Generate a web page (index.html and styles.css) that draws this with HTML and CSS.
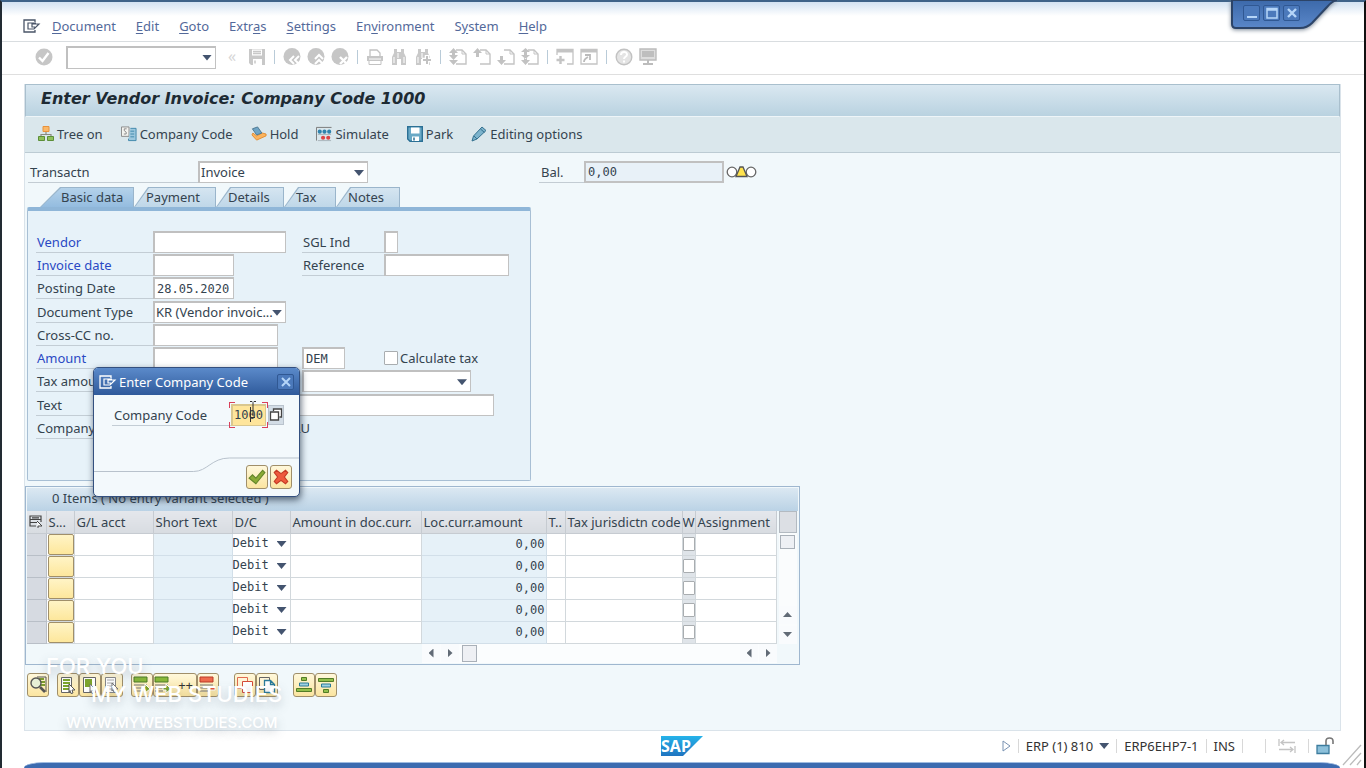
FILE: index.html
```
<!DOCTYPE html>
<html lang="en">
<head>
    <meta charset="UTF-8">
    <meta name="viewport" content="width=device-width, initial-scale=1.0">
    <title>Enter Vendor Invoice: Company Code 1000</title>
    <link rel="stylesheet" href="styles.css">
</head>
<body>
    <!-- Icon set -->
    <svg class="sprite" aria-hidden="true">
        <symbol id="i-menu" viewBox="0 0 18 14"><path d="M12 3V1H1v12h11v-2" fill="none" stroke="currentColor" stroke-width="1.3"/><path d="M13 4H5v6h6l5-5H9v3h3" fill="none" stroke="currentColor" stroke-width="1.2"/></symbol>
        <symbol id="i-ok" viewBox="0 0 18 18"><circle cx="9" cy="9" r="8.500" fill="#c6c6c6"/><path d="M4 9.500l3.500 3.500L13.500 5" fill="none" stroke="#fff" stroke-width="2.400"/></symbol>
        <symbol id="i-save" viewBox="0 0 18 18"><path d="M1 1h16v16H3l-2-2z" fill="#c8c8c8"/><path d="M4 1.500h10v6H4zM5 11h9v6H5z" fill="#fff"/><path d="M5 3.500h8M5 5.500h8M7 12.500v3" stroke="#c8c8c8" stroke-width="1.500"/></symbol>
        <symbol id="i-back" viewBox="0 0 18 18"><circle cx="9" cy="8.500" r="8.500" fill="#c6c6c6"/><path d="M11 8l-4 4 4 4M16 8l-4 4 4 4" fill="none" stroke="#fff" stroke-width="2"/></symbol>
        <symbol id="i-exit" viewBox="0 0 18 18"><circle cx="9" cy="8.500" r="8.500" fill="#c6c6c6"/><path d="M8 11l4-4 4 4M8 16l4-4 4 4" fill="none" stroke="#fff" stroke-width="2"/></symbol>
        <symbol id="i-cancel" viewBox="0 0 18 18"><circle cx="9" cy="8.500" r="8.500" fill="#c6c6c6"/><path d="M9 9l7 7M16 9l-7 7" fill="none" stroke="#fff" stroke-width="2.400"/></symbol>
        <symbol id="i-print" viewBox="0 0 18 18"><path d="M4 8V2h7l3 3v3" fill="#fff" stroke="#c2c2c2" stroke-width="1.300"/><path d="M1 8h16v5H1z" fill="#c6c6c6"/><path d="M3 13v3.500h12V13M4 10.500h10" fill="none" stroke="#c2c2c2"/><path d="M3 11h12" stroke="#fff"/></symbol>
        <symbol id="i-find" viewBox="0 0 18 18"><path d="M4 1h3v3h4V1h3v4l2 4v8h-5v-6H7v6H2V9l2-4z" fill="#c9c9c9"/><path d="M4 9v6M14 9v6M8 5v5" stroke="#fff"/></symbol>
        <symbol id="i-findnext" viewBox="0 0 18 18"><path d="M4 1h3v3h4V1h3v4l2 4v8h-5v-6H7v6H2V9l2-4z" fill="#c9c9c9"/><path d="M4 9v6M8 5v5" stroke="#fff"/><path d="M13 7v10M8 12h10" stroke="#fff" stroke-width="4.500"/><path d="M13 8v8M9 12h8" stroke="#c2c2c2" stroke-width="2"/></symbol>
        <symbol id="i-page" viewBox="0 0 18 18"><path d="M7 2h6l4 4v10H7" fill="none" stroke="#c4c4c4" stroke-width="1.400"/><path d="M13 2v4h4" fill="none" stroke="#c4c4c4"/></symbol>
        <symbol id="i-first" viewBox="0 0 18 18"><use href="#i-page"/><path d="M0 5l4.500-5L9 5H6v2h3l-4.500 5L0 7h3V5zM0 12l4.500 5L9 12z" fill="#c2c2c2"/></symbol>
        <symbol id="i-prev" viewBox="0 0 18 18"><use href="#i-page"/><path d="M0 5l4.500-5L9 5H6v4H3V5z" fill="#c2c2c2"/></symbol>
        <symbol id="i-next" viewBox="0 0 18 18"><use href="#i-page"/><path d="M0 12l4.500 5L9 12H6V8H3v4z" fill="#c2c2c2"/></symbol>
        <symbol id="i-last" viewBox="0 0 18 18"><use href="#i-page"/><path d="M0 4l4.500-4L9 4H6v3h3l-4.500 4L0 7h3V4zM0 12l4.500 5L9 12H6v-2H3v2z" fill="#c2c2c2"/></symbol>
        <symbol id="i-session" viewBox="0 0 18 18"><path d="M1 7V1.500h16V16h-6" fill="none" stroke="#c4c4c4" stroke-width="1.300"/><path d="M1 3h16" stroke="#c4c4c4" stroke-width="3"/><path d="M4.500 8v8M.5 12h8" stroke="#c4c4c4" stroke-width="2.400"/></symbol>
        <symbol id="i-shortcut" viewBox="0 0 18 18"><path d="M1 1.500h16V16H1z" fill="none" stroke="#c4c4c4" stroke-width="1.300"/><path d="M1 3h16" stroke="#c4c4c4" stroke-width="3"/><path d="M4 14c0-3 2-4 4-5M5 7h5v5" fill="none" stroke="#bbb" stroke-width="1.800"/></symbol>
        <symbol id="i-help" viewBox="0 0 18 18"><circle cx="9" cy="9" r="7.800" fill="#e4e4e4" stroke="#c2c2c2" stroke-width="1.400"/><path d="M6 7c0-4 6-4 6-.5C12 9 9 8.500 9 11M9 12.500v2" fill="none" stroke="#fff" stroke-width="2"/></symbol>
        <symbol id="i-monitor" viewBox="0 0 18 18"><path d="M1 1h16v11H1z" fill="#ddd" stroke="#bcbcbc" stroke-width="1.400"/><path d="M3 4h12M3 6h12M3 8h12" stroke="#b4b4b4" stroke-width="1.400"/><path d="M8 12h2v3h4v2H4v-2h4z" fill="#bcbcbc"/></symbol>
        <symbol id="i-tree" viewBox="0 0 16 16"><path d="M8 5v4M3 11V8.500h10V11" fill="none" stroke="#8a8a80" stroke-width="1.200"/><path d="M5 .5h6v5H5z" fill="#fbb868" stroke="#e8923c"/><path d="M.5 10.500h6v4h-6zM9.500 10.500h6v4h-6z" fill="#8fc05c" stroke="#5c8f38"/></symbol>
        <symbol id="i-company" viewBox="0 0 17 16"><path d="M.5.500h8v10h-8z" fill="#f4f4f0" stroke="#888"/><path d="M6 2.500H3.500v2l2 1.500v2H3" fill="none" stroke="#888"/><path d="M10 2h6v13H8v-2" fill="#9cc8de" stroke="#3f88ab"/><path d="M10 5h4M10 8h4M10 11h4" stroke="#3f88ab"/></symbol>
        <symbol id="i-hold" viewBox="0 0 17 16"><path d="M1 9l5 5.500 10-4.500V8l-4-1-6 3-4-3z" fill="#fbb45e" stroke="#e38c2e"/><path d="M1.500 2.500L7 .5l4.500 6.500L6 9z" fill="#6fa5c6" stroke="#4b7690"/></symbol>
        <symbol id="i-simulate" viewBox="0 0 17 16"><path d="M.5 15V1h16" fill="none" stroke="#777"/><path d="M2 8.500h14M2 15h14" stroke="#a9b4ba"/><g fill="#2f83ad"><circle cx="4" cy="5.500" r="2.200"/><circle cx="9" cy="5.500" r="2.200"/><circle cx="14" cy="5.500" r="2.200"/></g><g fill="#d44"><circle cx="7.500" cy="12" r="2.200"/><circle cx="13" cy="12" r="2.200"/></g></symbol>
        <symbol id="i-park" viewBox="0 0 16 16"><path d="M.7.700h14.600v14.600H3L.7 13z" fill="#69a9c6" stroke="#2b7095" stroke-width="1.400"/><path d="M4 1.500h8.500v6H4zM5 10.500h7V15H5z" fill="#fff"/><path d="M7 11.500v3" stroke="#2b7095" stroke-width="1.500"/></symbol>
        <symbol id="i-edit" viewBox="0 0 16 16"><path d="M1 15l1.500-5L11 1l4 3.500L6 13z" fill="#7cb3cc" stroke="#34718f"/><path d="M3 10l3 3M9.500 3l4 3.500" stroke="#34718f" fill="none"/></symbol>
        <symbol id="i-config" viewBox="0 0 14 14"><path d="M1 1h11v3.500H1zM1 4.500V11h6M3 2.800h7M1 7.500h7M12 4v3" fill="none" stroke="#444" stroke-width="1.200"/><path d="M8 6l5 5H9v2" fill="#fff" stroke="#444"/></symbol>
        <symbol id="b-detail" viewBox="0 0 18 18"><path d="M8 1h9v15" fill="none" stroke="#555"/><path d="M10 3h5M11 6h5M11 9h5" stroke="#7d9c2f" stroke-width="2"/><circle cx="7" cy="7" r="5" fill="#e7efd6" stroke="#555" stroke-width="1.400"/><path d="M11 11l5 5" stroke="#555" stroke-width="2.600"/></symbol>
        <symbol id="b-select" viewBox="0 0 18 18"><path d="M2.500 1.500h10v15h-10z" fill="#fff" stroke="#666"/><path d="M4 4h7M4 7h7M4 10h7M4 13h7" stroke="#7da52c" stroke-width="2"/><path d="M10 8l6 6h-3l1 3-2 .5-1-3-1 1.500z" fill="#fff" stroke="#555"/></symbol>
        <symbol id="b-block" viewBox="0 0 18 18"><path d="M2.500 1.500h12v15h-12z" fill="#fff" stroke="#666"/><path d="M4 3h7v8H4z" fill="#7da52c"/><path d="M9 8l6 6h-3l1 3-2 .5-1-3-1 1.500z" fill="#fff" stroke="#777"/></symbol>
        <symbol id="b-deselect" viewBox="0 0 18 18"><path d="M2.500 1.500h10v15h-10z" fill="#fff" stroke="#888"/><path d="M4 4h7M4 7h7M4 10h7M4 13h7" stroke="#aaa"/><path d="M9 7l6 6h-3l1 3-2 .5-1-3-1 1.500z" fill="#fff" stroke="#777"/></symbol>
        <symbol id="b-insert" viewBox="0 0 18 18"><path d="M1 1h13v5H1z" fill="#88b83a" stroke="#4d7a26"/><path d="M1 9h13M1 12h8M1 15h8" stroke="#777"/><path d="M9 11h3V8l5 5-5 4v-3H9z" fill="#7da52c" stroke="#fff"/></symbol>
        <symbol id="b-delete" viewBox="0 0 18 18"><path d="M1 1h13v5H1z" fill="#ee6a4d" stroke="#bb3d28"/><path d="M1 9h13M1 12h8M1 15h8" stroke="#777"/><path d="M9 11h7v3H9z" fill="#e6533c" stroke="#fff"/></symbol>
        <symbol id="b-copy" viewBox="0 0 18 18"><path d="M1.500 1.500h10v11h-10z" fill="#fff5d8" stroke="#e06a50"/><path d="M6.500 5.500h10v11h-10z" fill="#fff" stroke="#d44b38"/></symbol>
        <symbol id="b-paste" viewBox="0 0 18 18"><path d="M1.500 1.500h10v12h-10z" fill="#fff5d8" stroke="#666"/><path d="M6.500 4.500h6l4 4v8h-10zM12.500 4.500v4h4" fill="#fff" stroke="#2a7a9a" stroke-width="1.300"/></symbol>
        <symbol id="b-asc" viewBox="0 0 18 18"><path d="M6.500 1.500h5v3h-5zM1.500 12.500h15v3h-15z" fill="#92c04c" stroke="#527c26"/><path d="M4.500 7h9v3h-9z" fill="#9fd2e2" stroke="#2a7a9a"/></symbol>
        <symbol id="b-desc" viewBox="0 0 18 18"><path d="M6.500 13.500h5v3h-5zM1.500 2.500h15v3h-15z" fill="#92c04c" stroke="#527c26"/><path d="M4.500 8h9v3h-9z" fill="#9fd2e2" stroke="#2a7a9a"/></symbol>
    </svg>

    <div class="window">
        <nav class="menubar">
            <button class="menu-icon" aria-label="System menu"><svg width="18" height="14"><use href="#i-menu"/></svg></button>
            <a href="#"><u>D</u>ocument</a>
            <a href="#"><u>E</u>dit</a>
            <a href="#"><u>G</u>oto</a>
            <a href="#">Extr<u>a</u>s</a>
            <a href="#"><u>S</u>ettings</a>
            <a href="#">En<u>v</u>ironment</a>
            <a href="#">S<u>y</u>stem</a>
            <a href="#"><u>H</u>elp</a>
        </nav>

        <!-- Window controls -->
        <div class="controls">
            <svg class="controls-shape" viewBox="0 0 106 30" width="106" height="30" aria-hidden="true">
                <defs><linearGradient id="ctl" x1="0" y1="0" x2="0" y2="1"><stop offset="0" stop-color="#3c69aa"/><stop offset="1" stop-color="#5a87c9"/></linearGradient></defs>
                <path d="M1 0v24q0 4 4 4h64q7 0 12-5l15-16q5-6 10-7z" fill="url(#ctl)" stroke="#2c4468" stroke-width="2"/>
            </svg>
            <button aria-label="Minimize"><svg viewBox="0 0 12 12"><path d="M1 10h10" stroke="currentColor" stroke-width="2"/></svg></button>
            <button aria-label="Maximize"><svg viewBox="0 0 12 12"><path d="M1 1.500h10v9.500H1zM1 3h10" fill="none" stroke="currentColor" stroke-width="1.500"/></svg></button>
            <button aria-label="Close"><svg viewBox="0 0 12 12"><path d="M2 2l8 8M10 2l-8 8" stroke="currentColor" stroke-width="2.400"/></svg></button>
        </div>

        <div class="toolbar">
            <button aria-label="Enter"><svg><use href="#i-ok"/></svg></button>
            <span class="combo command"><input type="text" aria-label="Command"></span>
            <span class="chevrons">«</span>
            <button aria-label="Save"><svg><use href="#i-save"/></svg></button>
            <i class="sep"></i>
            <div class="group">
                <button aria-label="Back"><svg><use href="#i-back"/></svg></button>
                <button aria-label="Exit"><svg><use href="#i-exit"/></svg></button>
                <button aria-label="Cancel"><svg><use href="#i-cancel"/></svg></button>
            </div>
            <i class="sep"></i>
            <div class="group">
                <button aria-label="Print"><svg><use href="#i-print"/></svg></button>
                <button aria-label="Find"><svg><use href="#i-find"/></svg></button>
                <button aria-label="Find next"><svg><use href="#i-findnext"/></svg></button>
            </div>
            <i class="sep"></i>
            <div class="group">
                <button aria-label="First page"><svg><use href="#i-first"/></svg></button>
                <button aria-label="Previous page"><svg><use href="#i-prev"/></svg></button>
                <button aria-label="Next page"><svg><use href="#i-next"/></svg></button>
                <button aria-label="Last page"><svg><use href="#i-last"/></svg></button>
            </div>
            <i class="sep"></i>
            <div class="group">
                <button aria-label="New session"><svg><use href="#i-session"/></svg></button>
                <button aria-label="Create shortcut"><svg><use href="#i-shortcut"/></svg></button>
            </div>
            <i class="sep"></i>
            <div class="group">
                <button aria-label="Help"><svg><use href="#i-help"/></svg></button>
                <button aria-label="Layout"><svg><use href="#i-monitor"/></svg></button>
            </div>
        </div>

        <main class="workspace">
            <h1>Enter Vendor Invoice: Company Code 1000</h1>
            <div class="app-toolbar">
                <button><svg><use href="#i-tree"/></svg>Tree on</button>
                <button><svg><use href="#i-company"/></svg>Company Code</button>
                <button><svg><use href="#i-hold"/></svg>Hold</button>
                <button><svg><use href="#i-simulate"/></svg>Simulate</button>
                <button><svg><use href="#i-park"/></svg>Park</button>
                <button><svg><use href="#i-edit"/></svg>Editing options</button>
            </div>

            <div class="transaction">
                <label for="transactn">Transactn</label>
                <span class="combo"><select id="transactn"><option>Invoice</option></select></span>
                <label for="balance" class="bal">Bal.</label>
                <input type="text" id="balance" class="mono" value="0,00" readonly>
                <svg class="lights" width="32" height="14" viewBox="0 0 32 14" aria-hidden="true"><g fill="#fff" stroke="#666" stroke-width="1.300"><circle cx="6" cy="7" r="4.800"/><circle cx="25" cy="7" r="4.800"/></g><path d="M14 2h3l4 9.500H10z" fill="#ffe34d" stroke="#555" stroke-width="1.300"/></svg>
            </div>

            <div class="tabs" role="tablist">
                <button role="tab" class="tab active" aria-selected="true"><span>Basic data</span></button>
                <button role="tab" class="tab payment"><span>Payment</span></button>
                <button role="tab" class="tab details"><span>Details</span></button>
                <button role="tab" class="tab tax"><span>Tax</span></button>
                <button role="tab" class="tab notes"><span>Notes</span></button>
            </div>

            <div class="panel">
                <div class="row">
                    <label for="vendor" class="required">Vendor</label>
                    <input type="text" id="vendor" class="w-l">
                    <label for="sgl">SGL Ind</label>
                    <input type="text" id="sgl" class="w-xs">
                </div>
                <div class="row">
                    <label for="invoice-date" class="required">Invoice date</label>
                    <input type="text" id="invoice-date" class="w-s">
                    <label for="reference">Reference</label>
                    <input type="text" id="reference" class="w-m">
                </div>
                <div class="row">
                    <label for="posting-date">Posting Date</label>
                    <input type="text" id="posting-date" class="w-s mono" value="28.05.2020">
                </div>
                <div class="row">
                    <label for="doc-type">Document Type</label>
                    <span class="combo w-l"><select id="doc-type"><option>KR (Vendor invoic...</option></select></span>
                </div>
                <div class="row">
                    <label for="cross-cc">Cross-CC no.</label>
                    <input type="text" id="cross-cc" class="w-m">
                </div>
                <div class="row">
                    <label for="amount" class="required">Amount</label>
                    <input type="text" id="amount" class="w-m">
                    <input type="text" aria-label="Currency" class="w-cur mono" value="DEM">
                    <span class="check"><input type="checkbox" id="calc-tax"><label for="calc-tax">Calculate tax</label></span>
                </div>
                <div class="row">
                    <label for="tax-amount">Tax amount</label>
                    <input type="text" id="tax-amount" class="w-m">
                    <span class="combo w-code"><select aria-label="Tax code"><option></option></select></span>
                </div>
                <div class="row">
                    <label for="text">Text</label>
                    <input type="text" id="text" class="w-text">
                </div>
                <div class="row">
                    <label for="company">Company Code</label>
                    <output id="company" class="company">LU</output>
                </div>
            </div>

            <section class="items">
                <h2>0 Items ( No entry variant selected )</h2>
                <div class="items-body">
                    <table>
                        <colgroup>
                            <col class="c-sel"><col class="c-st"><col class="c-gl"><col class="c-short"><col class="c-dc"><col class="c-amt"><col class="c-loc"><col class="c-t"><col class="c-jur"><col class="c-w"><col class="c-asg">
                        </colgroup>
                        <thead>
                            <tr>
                                <th class="pick"><svg width="14" height="14" aria-hidden="true"><use href="#i-config"/></svg></th>
                                <th>S...</th>
                                <th>G/L acct</th>
                                <th>Short Text</th>
                                <th>D/C</th>
                                <th>Amount in doc.curr.</th>
                                <th>Loc.curr.amount</th>
                                <th>T..</th>
                                <th>Tax jurisdictn code</th>
                                <th class="narrow">W</th>
                                <th>Assignment</th>
                            </tr>
                        </thead>
                        <tbody id="items"></tbody>
                    </table>
                    <div class="vscroll">
                        <button class="corner" aria-label="Table settings"></button>
                        <span class="thumb"></span>
                        <button class="arrow up" aria-label="Scroll up"></button>
                        <button class="arrow down" aria-label="Scroll down"></button>
                    </div>
                </div>
                <div class="hscroll">
                    <button class="arrow left" aria-label="First column"></button>
                    <button class="arrow right" aria-label="Next column"></button>
                    <span class="thumb"></span>
                    <button class="arrow left end" aria-label="Previous column"></button>
                    <button class="arrow right" aria-label="Last column"></button>
                </div>
            </section>

            <div class="item-tools">
                <div><button aria-label="Detail"><svg><use href="#b-detail"/></svg></button></div>
                <div>
                    <button aria-label="Select all"><svg><use href="#b-select"/></svg></button>
                    <button aria-label="Select block"><svg><use href="#b-block"/></svg></button>
                    <button aria-label="Deselect all"><svg><use href="#b-deselect"/></svg></button>
                </div>
                <div>
                    <button aria-label="Insert row"><svg><use href="#b-insert"/></svg></button>
                    <button class="wide"><svg><use href="#b-insert"/></svg>++</button>
                    <button aria-label="Delete row"><svg><use href="#b-delete"/></svg></button>
                </div>
                <div>
                    <button aria-label="Copy"><svg><use href="#b-copy"/></svg></button>
                    <button aria-label="Copy fields"><svg><use href="#b-paste"/></svg></button>
                </div>
                <div>
                    <button aria-label="Sort ascending"><svg><use href="#b-asc"/></svg></button>
                    <button aria-label="Sort descending"><svg><use href="#b-desc"/></svg></button>
                </div>
            </div>
        </main>

        <footer class="statusbar">
            <svg class="logo" width="44" height="20" viewBox="0 0 44 20">
                <defs><linearGradient id="sap" x1="0" y1="0" x2="0" y2="1"><stop offset="0" stop-color="#25b3ea"/><stop offset="1" stop-color="#1f74c0"/></linearGradient></defs>
                <path d="M1 0h42L23 20H1z" fill="url(#sap)"/>
                <text x="1" y="16" class="logo-text">SAP</text>
            </svg>
            <div class="status">
                <svg width="9" height="12" viewBox="0 0 9 12"><path d="M1 1l7 5-7 5z" fill="#fff" stroke="#7b93b3"/></svg>
                <i class="sep"></i>
                <button class="system">ERP (1) 810</button>
                <i class="sep"></i>
                <span>ERP6EHP7-1</span>
                <i class="sep"></i>
                <span>INS</span>
                <i class="sep"></i>
                <i class="sep far"></i>
                <svg class="transfer" width="18" height="14" viewBox="0 0 18 14"><path d="M1 0v7M3 3.500h14M6 1L3 3.500 6 6M17 7v7M1 10.500h14M12 8l3 2.500-3 2.500" fill="none" stroke="#c4c4c4" stroke-width="1.300"/></svg>
                <i class="sep"></i>
                <svg width="18" height="18" viewBox="0 0 18 18"><path d="M1 8.500h12v8H1z" fill="#8cc0da" stroke="#3c7c9e" stroke-width="1.300"/><path d="M10 8V4q0-3 3.500-3T17 4v3" fill="none" stroke="#777" stroke-width="1.600"/></svg>
            </div>
            <svg class="grip" width="22" height="22" viewBox="0 0 22 22"><path d="M1 21L19 1M8 21L19 9M15 21l4-5" stroke="#bbb" stroke-width="1.300"/></svg>
        </footer>
        <div class="bottom-edge"></div>

        <form class="dialog" role="dialog" aria-labelledby="dialog-title">
            <header>
                <svg width="18" height="14"><use href="#i-menu"/></svg>
                <span id="dialog-title">Enter Company Code</span>
                <button type="button" aria-label="Close"><svg viewBox="0 0 12 12"><path d="M2 2l8 8M10 2l-8 8" stroke="currentColor" stroke-width="2"/></svg></button>
            </header>
            <div class="dialog-row">
                <label for="cc">Company Code</label>
                <span class="focus"><input type="text" id="cc" class="mono" value="1000"></span>
                <button type="button" class="match" aria-label="Search help"><svg width="14" height="14" viewBox="0 0 14 14"><path d="M4.500 3V1h8v8h-2M1.500 4h8v8h-8z" fill="#fff" stroke="#444" stroke-width="1.300"/></svg></button>
                <svg class="cursor" width="8" height="22" viewBox="0 0 8 22"><path d="M2 .5h2l1 1 1-1h2M5 2v13M3 16.500h4" fill="none" stroke="#333"/><path d="M2.500 6v15" stroke="#333"/></svg>
            </div>
            <svg class="curve" viewBox="0 0 206 16" height="16" preserveAspectRatio="none"><path d="M0 14.500h100c14 0 18-13.500 36-13.500h70" fill="none" stroke="#b8c2cc"/></svg>
            <div class="dialog-actions">
                <button type="button" aria-label="Continue"><svg viewBox="0 0 16 16"><path d="M1 9l3-3 3 3 6-7 2 2-8 10z" fill="#8aab35" stroke="#64852a"/></svg></button>
                <button type="button" aria-label="Cancel"><svg viewBox="0 0 16 16"><path d="M2 4l2-2 4 3 4-3 2 2-3 4 3 4-2 2-4-3-4 3-2-2 3-4z" fill="#ee5a3c" stroke="#c43a24"/></svg></button>
            </div>
        </form>

        <div class="watermark">
            <p>FOR YOU</p>
            <p class="second">MY WEB STUDIES</p>
            <p class="site">WWW.MYWEBSTUDIES.COM</p>
        </div>
    </div>

    <script>
        const items = document.getElementById('items');

        // Empty item lines
        for (let i = 1; i <= 5; i++) {
            const row = document.createElement('tr');
            row.innerHTML = `
                <td class="pick"></td>
                <td class="state"><button aria-label="Status ${i}"></button></td>
                <td><input type="text" aria-label="G/L acct ${i}"></td>
                <td class="locked"></td>
                <td class="dc"><span class="combo"><select class="mono" aria-label="D/C ${i}"><option>Debit</option></select></span></td>
                <td><input type="text" aria-label="Amount ${i}"></td>
                <td class="locked num mono">0,00</td>
                <td></td>
                <td><input type="text" aria-label="Tax jurisdiction ${i}"></td>
                <td class="flag"><input type="checkbox" aria-label="W ${i}"></td>
                <td><input type="text" aria-label="Assignment ${i}"></td>`;
            items.appendChild(row);
        }
    </script>
</body>
</html>
```
FILE: styles.css
```
* {
    box-sizing: border-box;
}

body {
    margin: 0;
    background-color: #fff;
    color: #34434f;
    font-family: "Noto Sans", Tahoma, sans-serif;
    font-size: 13px;
    line-height: 18px;
}

button, input, select {
    margin: 0;
    padding: 0;
    border: none;
    border-radius: 0;
    background: none;
    color: inherit;
    font: inherit;
}

a {
    color: inherit;
    text-decoration: none;
}

p, h1, h2 {
    margin: 0;
}

svg {
    display: block;
    flex: none;
}

.sprite {
    display: none;
}

.mono {
    font-family: "DejaVu Sans Mono", monospace;
    font-size: 12px;
}

/* Window frame */
.window {
    position: relative;
    display: flex;
    flex-direction: column;
    min-height: 100vh;
    border-top: 2px solid #3f6389;
    border-left: 2px solid #222b33;
    border-right: 2px solid #111;
}

.menubar {
    display: flex;
    align-items: center;
    gap: 20px;
    height: 40px;
    padding: 8px 21px 0;
    border-bottom: 1px solid #d9dde0;
    background: linear-gradient(#d3e2f2, #fff 14px);
    color: #53699a;
}

.menubar u {
    text-underline-offset: 2px;
}

.menu-icon {
    color: #4a5568;
    margin-right: -9px;
}

.controls {
    position: absolute;
    top: -2px;
    right: 27px;
    display: flex;
    gap: 3px;
    width: 106px;
    padding: 5px 12px;
    filter: drop-shadow(0 1px 2px #7a8796);
}

.controls-shape {
    position: absolute;
    top: 0;
    left: 0;
}

.controls button, .dialog header button {
    position: relative;
    display: flex;
    align-items: center;
    justify-content: center;
    width: 17px;
    height: 16px;
    border: 1px solid #305893;
    border-radius: 2px;
    background-color: #4b79bb;
    color: #b5d5f8;
}

.controls button svg, .dialog header button svg {
    width: 12px;
    height: 12px;
}

.toolbar {
    display: flex;
    align-items: center;
    height: 33px;
    padding: 0 33px 2px;
    border-bottom: 1px solid #dfdfdf;
}

.toolbar button, .toolbar button svg {
    display: block;
    width: 18px;
    height: 18px;
}

.toolbar .group {
    display: flex;
    gap: 6px;
}

.sep {
    width: 1px;
    height: 14px;
    margin: 0 8px;
    background-color: #b9cbd8;
}

.chevrons {
    margin: 0 12px 3px;
    color: #d6d6d6;
    font-size: 16px;
}

/* Fields */
input[type="text"], .combo {
    height: 22px;
    border: 1px solid #c2c2c2;
    border-top: 2px solid #c0c0c0;
    border-left: 2px solid #c0c0c0;
    background-color: #fff;
}

input[type="text"] {
    padding: 0 2px;
}

.combo {
    display: grid;
    align-items: center;
}

.combo::after {
    content: "";
    grid-area: 1 / 1;
    justify-self: end;
    width: 10px;
    height: 6px;
    margin-right: 3px;
    background-color: #44546f;
    clip-path: polygon(0 0, 100% 0, 50% 100%);
    pointer-events: none;
}

.combo select {
    grid-area: 1 / 1;
    width: 100%;
    padding: 0 0 2px 1px;
    appearance: none;
}

.combo input[type="text"] {
    grid-area: 1 / 1;
    width: 100%;
    height: 100%;
    border: none;
}

.command {
    width: 150px;
    height: 23px;
    margin-left: 13px;
}

input[type="checkbox"] {
    appearance: none;
    width: 14px;
    height: 14px;
    border: 1px solid #a9adb0;
    border-radius: 1px;
    background-color: #fff;
}

/* Workspace */
.workspace {
    flex: 1;
    margin: 9px 23px 0 22px;
    border: 1px solid #dae3ea;
    border-top: none;
    background-color: #f1f8fb;
}

h1 {
    height: 33px;
    padding-left: 15px;
    border: 1px solid #a9bfcd;
    border-bottom: 1px solid #eef5f8;
    background: linear-gradient(#dae8f1, #b9d2e0);
    color: #1d2a33;
    font-family: "DejaVu Sans", Verdana, sans-serif;
    font-size: 16px;
    font-style: italic;
    font-weight: bold;
    line-height: 28px;
}

.app-toolbar {
    display: flex;
    align-items: center;
    gap: 18px;
    height: 36px;
    padding: 0 13px 2px;
    border-bottom: 1px solid #bccbd3;
    background-color: #dae7ec;
}

.app-toolbar button {
    display: flex;
    align-items: center;
    gap: 3px;
}

.app-toolbar svg {
    width: 16px;
    height: 16px;
}

.transaction {
    display: flex;
    height: 30px;
    margin-top: 8px;
    padding-left: 3px;
}

.transaction label {
    width: 170px;
    height: 22px;
    padding: 2px;
    border-bottom: 1px solid #c3ccd3;
}

.transaction .combo {
    width: 170px;
    line-height: 18px;
}

.transaction .bal {
    width: 45px;
    margin-left: 171px;
}

.transaction input {
    width: 140px;
    border-bottom-width: 2px;
    border-right-width: 2px;
    background-color: #e8f1f8;
}

.lights {
    margin: 4px 0 0 2px;
}

/* Tabs */
.tabs {
    display: flex;
    align-items: flex-end;
    height: 16px;
    padding-left: 15px;
}

.tab {
    display: grid;
    width: 82px;
    height: 20px;
    background-color: #9ab5cb;
    clip-path: polygon(0 100%, 14px 0, 100% 0, 100% 100%);
}

.tab span {
    padding: 0 0 0 11px;
    margin: 1px 1px 0 1px;
    background: linear-gradient(#d5e5f1, #bfd7e8);
    clip-path: polygon(0 100%, 14px 0, 100% 0, 100% 100%);
    text-align: left;
}

.tab.active {
    width: 94px;
    clip-path: polygon(0 100%, 20px 0, 100% 0, 100% 100%);
}

.tab.active span {
    padding-left: 20px;
    background: linear-gradient(#b4d2ea, #94bcdf);
    clip-path: polygon(0 100%, 20px 0, 100% 0, 100% 100%);
}

.tab.details {
    width: 68px;
}

.tab.tax {
    width: 52px;
}

.tab.notes {
    width: 64px;
}

.panel {
    display: grid;
    grid-template-rows: repeat(9, 1fr);
    width: 504px;
    height: 274px;
    margin-left: 2px;
    padding: 20px 8px 40px;
    border: 1px solid #a8bfd4;
    border-top: 4px solid #8fb6d8;
    border-radius: 2px;
    background-color: #e7f2f9;
}

.row {
    display: grid;
    grid-template-columns: 117px 149px 82px 1fr;
    height: 22px;
}

.row > label {
    height: 22px;
    padding: 2px 1px;
    border-bottom: 1px solid #c3cdd5;
}

.row .required {
    color: #2a49c4;
}

.w-xs { width: 14px; }
.w-s { width: 81px; }
.w-m { width: 125px; }
.w-l { width: 133px; }
.w-cur { width: 43px; }
.w-code { width: 169px; }
.w-text { width: 341px; }

.check {
    display: flex;
    align-items: center;
    gap: 2px;
}

.company {
    width: 157px;
    padding-top: 2px;
    text-align: right;
}

/* Item list */
.items {
    width: 775px;
    margin-top: 5px;
    padding: 1px;
    border: 1px solid #9fb7cf;
}

h2 {
    height: 23px;
    padding-left: 25px;
    background: linear-gradient(#dbe8f2, #bad2e5);
    font-size: 13px;
    font-weight: normal;
    line-height: 20px;
}

.items-body {
    display: flex;
    gap: 2px;
}

table {
    width: 749px;
    border-collapse: collapse;
    table-layout: fixed;
}

.c-sel { width: 19px; }
.c-st { width: 28px; }
.c-gl { width: 79px; }
.c-short { width: 79px; }
.c-dc { width: 58px; }
.c-amt { width: 131px; }
.c-loc { width: 125px; }
.c-t { width: 19px; }
.c-jur { width: 117px; }
.c-w { width: 13px; }
.c-asg { width: 81px; }

th, td {
    height: 22px;
    padding: 0;
    border-right: 1px solid #d2d8dc;
    border-bottom: 1px solid #d2d8dc;
    background-color: #fff;
    overflow: hidden;
    white-space: nowrap;
}

th {
    padding-left: 2px;
    background: linear-gradient(#e4e7ec, #d8dce1);
    border-color: #c6cbd1;
    font-weight: normal;
    text-align: left;
}

th.narrow {
    padding-left: 0;
}

td input[type="text"] {
    display: block;
    width: 100%;
    height: 20px;
    border: none;
}

td.pick {
    background-color: #d6dae1;
    border-color: #b9bfc7;
}

.state button {
    display: block;
    width: 26px;
    height: 21px;
    margin-left: 1px;
    border: 1px solid #a08f6a;
    border-radius: 2px;
    background: linear-gradient(#fff4c6, #fde79c);
}

td.locked {
    background-color: #e6f1f8;
    border-color: #d2dfe9;
}

.num {
    padding-right: 1px;
    text-align: right;
}

.dc .combo {
    height: 20px;
    border: none;
}

.dc select {
    padding-left: 0;
}

.flag {
    background-color: #dfe4e9;
}

.flag input[type="checkbox"] {
    display: block;
    width: 12px;
}

.vscroll {
    display: flex;
    flex-direction: column;
    align-items: center;
    width: 18px;
    background-color: #fafcfd;
}

.corner {
    width: 18px;
    height: 22px;
    margin-bottom: 2px;
    border: 1px solid #b3bac1;
    background-color: #dcdfe4;
}

.thumb {
    width: 15px;
    height: 14px;
    border: 1px solid #a9b0b8;
    background-color: #eef0f4;
}

.arrow {
    display: grid;
    place-items: center;
    width: 18px;
    height: 18px;
    background-color: #f9fbfd;
}

.arrow::before {
    content: "";
    width: 9px;
    height: 5px;
    background-color: #626b76;
    clip-path: polygon(0 0, 100% 0, 50% 100%);
}

.arrow.up {
    margin-top: auto;
    margin-bottom: 2px;
}

.arrow.up::before {
    clip-path: polygon(0 100%, 50% 0, 100% 100%);
}

.arrow.left::before, .arrow.right::before {
    width: 5px;
    height: 9px;
}

.arrow.left::before {
    clip-path: polygon(100% 0, 100% 100%, 0 50%);
}

.arrow.right::before {
    clip-path: polygon(0 0, 100% 50%, 0 100%);
}

.hscroll {
    display: flex;
    align-items: center;
    gap: 1px;
    height: 19px;
    margin: 0 21px 0 395px;
    background-color: #fbfdfe;
}

.hscroll .thumb {
    height: 17px;
    margin-left: 2px;
}

.hscroll .end {
    margin-left: auto;
}

.item-tools {
    display: flex;
    gap: 8px;
    padding: 8px 0 0 2px;
}

.item-tools > div {
    display: flex;
}

.item-tools > div:nth-child(4), .item-tools > div:nth-child(5) {
    margin-left: 7px;
}

.item-tools button, .dialog-actions button {
    display: flex;
    align-items: center;
    justify-content: center;
    width: 22px;
    height: 24px;
    border: 1px solid #a08f6a;
    border-radius: 3px;
    background: linear-gradient(#fff8db, #fbe5a0);
    color: #333;
}

.item-tools .wide {
    justify-content: space-between;
    width: 44px;
    padding-right: 3px;
}

.item-tools svg, .dialog-actions svg {
    width: 18px;
    height: 18px;
}

/* Status bar */
.statusbar {
    position: relative;
    display: flex;
    align-items: center;
    justify-content: flex-end;
    height: 31px;
    padding: 0 30px 1px;
}

.logo {
    margin-right: auto;
    margin-left: 628px;
}

.logo-text {
    fill: #fff;
    font-size: 16px;
    font-weight: bold;
}

.status {
    display: flex;
    align-items: center;
    color: #333;
}

.status .sep {
    margin: 0 7px;
    background-color: #d8d8d8;
}

.status .far {
    margin: 0 12px 0 15px;
}

.transfer {
    margin-right: 5px;
}

.system {
    display: flex;
    align-items: center;
    gap: 6px;
}

.system::after {
    content: "";
    width: 10px;
    height: 6px;
    background-color: #44546f;
    clip-path: polygon(0 0, 100% 0, 50% 100%);
}

.grip {
    position: absolute;
    right: 0;
    bottom: -4px;
}

.bottom-edge {
    height: 6px;
    margin: 0 24px 0 22px;
    border-top: 1px solid #9fbbe0;
    border-radius: 20px 20px 0 0 / 6px 6px 0 0;
    background-color: #3c6bb0;
}

/* Dialog */
.dialog {
    position: absolute;
    top: 365px;
    left: 91px;
    width: 207px;
    height: 130px;
    border: 1px solid #34507f;
    border-radius: 5px;
    background-color: #f3f9fc;
    box-shadow: 1px 3px 7px rgba(30, 45, 65, 0.7);
}

.dialog header {
    display: flex;
    align-items: center;
    gap: 2px;
    height: 27px;
    padding: 0 5px;
    border-radius: 4px 4px 0 0;
    background: linear-gradient(#5b8aca, #2f5a9b);
    color: #fff;
}

.dialog header button {
    margin-left: auto;
}

.dialog-row {
    position: relative;
    display: flex;
    align-items: center;
    height: 39px;
    padding-left: 18px;
}

.dialog-row label {
    width: 119px;
    height: 22px;
    padding: 2px;
    border-bottom: 1px solid #c3cdd5;
}

/* Red corner brackets round the focused field */
.focus {
    padding: 2px;
    margin-left: -2px;
    background:
        linear-gradient(#d9405a, #d9405a) 0 0 / 6px 1px,
        linear-gradient(#d9405a, #d9405a) 0 0 / 1px 6px,
        linear-gradient(#d9405a, #d9405a) 100% 0 / 6px 1px,
        linear-gradient(#d9405a, #d9405a) 100% 0 / 1px 6px,
        linear-gradient(#d9405a, #d9405a) 0 100% / 6px 1px,
        linear-gradient(#d9405a, #d9405a) 0 100% / 1px 6px,
        linear-gradient(#d9405a, #d9405a) 100% 100% / 6px 1px,
        linear-gradient(#d9405a, #d9405a) 100% 100% / 1px 6px;
    background-repeat: no-repeat;
}

.focus input[type="text"] {
    display: block;
    width: 35px;
    padding: 0 1px;
    border-color: #d9c78f;
    background-color: #fee59b;
}

.match {
    display: grid;
    place-items: center;
    width: 16px;
    height: 20px;
    border: 1px solid #b9c3cd;
    background-color: #d3dde6;
}

.cursor {
    position: absolute;
    top: 6px;
    left: 154px;
}

.curve {
    width: 100%;
    margin-top: 23px;
}

.dialog-actions {
    display: flex;
    justify-content: flex-end;
    gap: 2px;
    margin-top: -8px;
    padding-right: 7px;
}

/* Video watermark */
.watermark {
    position: absolute;
    top: 650px;
    left: 44px;
    color: #fff;
    font-family: Inter, sans-serif;
    font-size: 22px;
    font-weight: 500;
    line-height: 28px;
    text-shadow: 0 4px 10px rgba(80, 95, 110, 0.35);
    white-space: nowrap;
    pointer-events: none;
}

.watermark .second {
    padding-left: 45px;
}

.watermark .site {
    padding: 1px 0 0 20px;
    font-size: 15px;
}
```
